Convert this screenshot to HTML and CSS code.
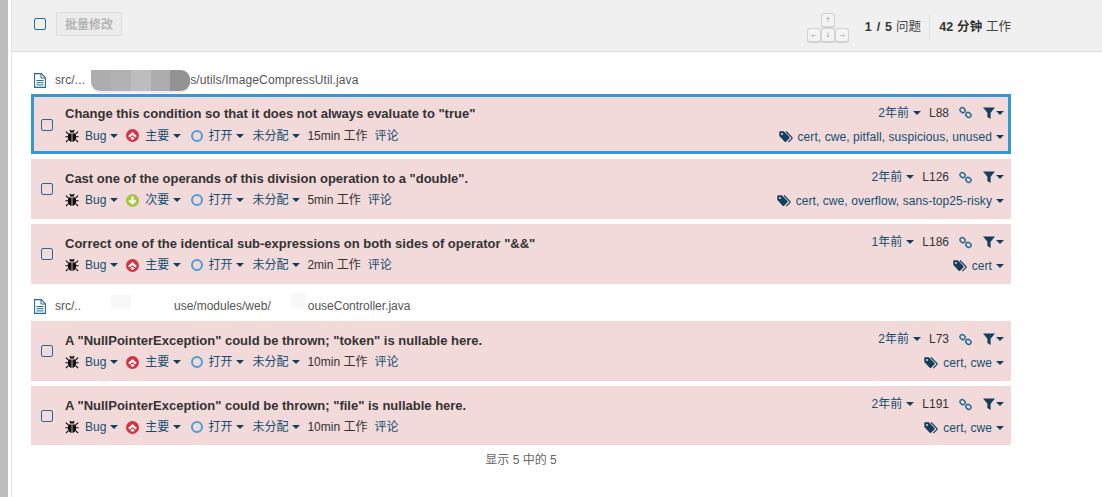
FILE: index.html
```html
<!DOCTYPE html>
<html lang="zh">
<head>
<meta charset="utf-8">
<title>问题</title>
<link rel="stylesheet" href="styles.css">
</head>
<body>
<svg class="defs" width="0" height="0" aria-hidden="true">
  <symbol id="bug" viewBox="0 0 14 14">
    <path fill="#111" d="M4.6 3.6C4.9 2 5.8 1.3 7 1.3s2.1.7 2.4 2.3zM3.7 4.4h6.6c.6.8.9 1.9.9 3.4 0 3.2-1.7 5.2-4.2 5.2S2.8 11 2.8 7.8c0-1.500.3-2.600.9-3.400z"/>
    <path fill="none" stroke="#111" stroke-width="1.100" d="M.8 2.700l2.700 2.300M13.200 2.700l-2.700 2.300M.3 7.800h2.700M13.700 7.800H11M.9 13l2.500-2.300M13.100 13l-2.500-2.300M4.700 1l1 1.200M9.300 1l-1 1.200"/>
    <path stroke="#f2d9da" stroke-width=".8" d="M7 4.400V13"/>
  </symbol>
  <symbol id="major" viewBox="0 0 13 13">
    <circle cx="6.500" cy="6.500" r="6.500" fill="#d4333f"/>
    <path fill="#fff" d="M6.500 3 10.800 6.900 9.300 8.400 6.500 5.900 3.700 8.400 2.200 6.900z"/>
    <path fill="#fff" d="M6.500 7.600 8.700 9.600 6.500 11 4.300 9.600z"/>
  </symbol>
  <symbol id="minor" viewBox="0 0 13 13">
    <circle cx="6.500" cy="6.500" r="6.500" fill="#a4c639"/>
    <path fill="none" stroke="#fff" stroke-width="2" d="M3.200 6.200 6.500 9.400l3.300-3.200"/>
    <path stroke="#fff" stroke-width="2.200" d="M6.500 2.500v6"/>
  </symbol>
  <symbol id="link" viewBox="0 0 13 13">
    <g fill="none" stroke="#236a97" stroke-width="1.500">
      <rect x=".9" y="1.900" width="5.400" height="4.400" rx="2.200" transform="rotate(40 3.600 4.100)"/>
      <rect x="6.700" y="6.700" width="5.400" height="4.400" rx="2.200" transform="rotate(40 9.400 8.900)"/>
    </g>
  </symbol>
  <symbol id="funnel" viewBox="0 0 12 12">
    <path fill="#12405c" d="M0 .5h12L7.600 5.700V12L4.400 10V5.700z"/>
  </symbol>
  <symbol id="tags" viewBox="0 0 14 12">
    <path fill="#12405c" d="M.3 1.300C.3.700.7.300 1.300.300h3.500l5.700 5.600c.4.400.4 1 0 1.400l-3.400 3.400c-.4.400-1 .4-1.400 0L.3 5z"/>
    <path fill="none" stroke="#12405c" stroke-width="1.200" d="M7 .5l5.800 5.800c.4.400.4.900 0 1.300L9.300 11.100"/>
    <circle cx="3" cy="3" r="1" fill="#f2d9da"/>
  </symbol>
  <symbol id="file" viewBox="0 0 12 15">
    <path fill="none" stroke="#236a97" stroke-width="1.100" d="M.6.600h6.700l4.100 4.100v9.700H.6z"/>
    <path fill="none" stroke="#236a97" d="M7 .6v4.400h4.400M2.500 7.500h7M2.500 9.700h7M2.500 11.900h7"/>
  </symbol>
</svg>

<div class="page">
  <aside class="scrollbar"></aside>
  <main class="main">
    <header class="toolbar">
      <div class="toolbar-left">
        <span class="check check-top"></span>
        <button class="bulk" disabled>批量修改</button>
      </div>
      <div class="toolbar-right">
        <div class="keys">
          <span class="key key-up">↑</span>
          <span class="key key-left">←</span>
          <span class="key key-down">↓</span>
          <span class="key key-right">→</span>
        </div>
        <div class="count"><b>1 / 5</b> 问题</div>
        <div class="effort"><b>42 分钟</b> 工作</div>
      </div>
    </header>

    <section class="content">
      <div class="file-head file-head-first">
        <svg class="file-icon"><use href="#file"/></svg>
        <span class="path">src/...</span>
        <span class="smudge">
          <i class="s1"></i><i class="s2"></i><i class="s3"></i><i class="s4"></i><i class="s5"></i>
        </span>
        <span class="path">s/utils/ImageCompressUtil.java</span>
      </div>

      <article class="issue selected">
        <span class="check"></span>
        <div class="body">
          <div class="line">
            <span class="title">Change this condition so that it does not always evaluate to "true"</span>
            <span class="side"><a>2年前<i class="caret"></i></a><span class="ln">L88</span><svg class="ic-link"><use href="#link"/></svg><span class="filter"><svg class="ic-funnel"><use href="#funnel"/></svg><i class="caret"></i></span></span>
          </div>
          <div class="line">
            <span class="meta"><svg class="ic-bug"><use href="#bug"/></svg><a>Bug<i class="caret"></i></a><svg class="ic-sev"><use href="#major"/></svg><a>主要<i class="caret"></i></a><span class="ring"></span><a>打开<i class="caret"></i></a><a>未分配<i class="caret"></i></a><span class="eff">15min 工作</span><a>评论</a></span>
            <span class="side"><svg class="ic-tags"><use href="#tags"/></svg><a class="tags">cert, cwe, pitfall, suspicious, unused<i class="caret"></i></a></span>
          </div>
        </div>
      </article>

      <article class="issue">
        <span class="check"></span>
        <div class="body">
          <div class="line">
            <span class="title">Cast one of the operands of this division operation to a "double".</span>
            <span class="side"><a>2年前<i class="caret"></i></a><span class="ln">L126</span><svg class="ic-link"><use href="#link"/></svg><span class="filter"><svg class="ic-funnel"><use href="#funnel"/></svg><i class="caret"></i></span></span>
          </div>
          <div class="line">
            <span class="meta"><svg class="ic-bug"><use href="#bug"/></svg><a>Bug<i class="caret"></i></a><svg class="ic-sev"><use href="#minor"/></svg><a>次要<i class="caret"></i></a><span class="ring"></span><a>打开<i class="caret"></i></a><a>未分配<i class="caret"></i></a><span class="eff">5min 工作</span><a>评论</a></span>
            <span class="side"><svg class="ic-tags"><use href="#tags"/></svg><a class="tags">cert, cwe, overflow, sans-top25-risky<i class="caret"></i></a></span>
          </div>
        </div>
      </article>

      <article class="issue">
        <span class="check"></span>
        <div class="body">
          <div class="line">
            <span class="title">Correct one of the identical sub-expressions on both sides of operator "&amp;&amp;"</span>
            <span class="side"><a>1年前<i class="caret"></i></a><span class="ln">L186</span><svg class="ic-link"><use href="#link"/></svg><span class="filter"><svg class="ic-funnel"><use href="#funnel"/></svg><i class="caret"></i></span></span>
          </div>
          <div class="line">
            <span class="meta"><svg class="ic-bug"><use href="#bug"/></svg><a>Bug<i class="caret"></i></a><svg class="ic-sev"><use href="#major"/></svg><a>主要<i class="caret"></i></a><span class="ring"></span><a>打开<i class="caret"></i></a><a>未分配<i class="caret"></i></a><span class="eff">2min 工作</span><a>评论</a></span>
            <span class="side"><svg class="ic-tags"><use href="#tags"/></svg><a class="tags">cert<i class="caret"></i></a></span>
          </div>
        </div>
      </article>

      <div class="file-head">
        <svg class="file-icon"><use href="#file"/></svg>
        <span class="path">src/..</span>
        <span class="gap-a"></span>
        <span class="path">use/modules/web/</span>
        <span class="gap-b"></span>
        <span class="path">ouseController.java</span>
      </div>

      <article class="issue">
        <span class="check"></span>
        <div class="body">
          <div class="line">
            <span class="title">A "NullPointerException" could be thrown; "token" is nullable here.</span>
            <span class="side"><a>2年前<i class="caret"></i></a><span class="ln">L73</span><svg class="ic-link"><use href="#link"/></svg><span class="filter"><svg class="ic-funnel"><use href="#funnel"/></svg><i class="caret"></i></span></span>
          </div>
          <div class="line">
            <span class="meta"><svg class="ic-bug"><use href="#bug"/></svg><a>Bug<i class="caret"></i></a><svg class="ic-sev"><use href="#major"/></svg><a>主要<i class="caret"></i></a><span class="ring"></span><a>打开<i class="caret"></i></a><a>未分配<i class="caret"></i></a><span class="eff">10min 工作</span><a>评论</a></span>
            <span class="side"><svg class="ic-tags"><use href="#tags"/></svg><a class="tags">cert, cwe<i class="caret"></i></a></span>
          </div>
        </div>
      </article>

      <article class="issue last">
        <span class="check"></span>
        <div class="body">
          <div class="line">
            <span class="title">A "NullPointerException" could be thrown; "file" is nullable here.</span>
            <span class="side"><a>2年前<i class="caret"></i></a><span class="ln">L191</span><svg class="ic-link"><use href="#link"/></svg><span class="filter"><svg class="ic-funnel"><use href="#funnel"/></svg><i class="caret"></i></span></span>
          </div>
          <div class="line">
            <span class="meta"><svg class="ic-bug"><use href="#bug"/></svg><a>Bug<i class="caret"></i></a><svg class="ic-sev"><use href="#major"/></svg><a>主要<i class="caret"></i></a><span class="ring"></span><a>打开<i class="caret"></i></a><a>未分配<i class="caret"></i></a><span class="eff">10min 工作</span><a>评论</a></span>
            <span class="side"><svg class="ic-tags"><use href="#tags"/></svg><a class="tags">cert, cwe<i class="caret"></i></a></span>
          </div>
        </div>
      </article>

      <p class="total">显示 5 中的 5</p>
    </section>
  </main>
</div>
</body>
</html>
```
FILE: styles.css
```css
* { box-sizing: border-box; }
html, body { margin: 0; height: 100%; overflow: hidden; background: #fff; }
body {
  font-family: "Liberation Sans", "Noto Sans CJK SC", sans-serif;
  font-size: 12px;
  line-height: 16px;
  color: #444;
}
.defs { position: absolute; }
.page { display: flex; height: 497px; }
.scrollbar { width: 12px; flex: none; background: #fff; border-left: 8px solid #bdbdbd; border-right: 1px solid #e6e6e6; }
.main { flex: 1; min-width: 0; }

.toolbar {
  height: 52px;
  background: #f0f0f0;
  border-bottom: 1px solid #ddd;
  display: flex;
  justify-content: space-between;
  padding: 0 91px 0 22px;
}
.toolbar-left { display: flex; align-items: center; gap: 10px; padding-bottom: 3px; }
.check {
  display: block;
  width: 12px;
  height: 12px;
  border: 1.5px solid #236a97;
  border-radius: 2px;
  flex: none;
}
.bulk {
  font: bold 12px/16px "Liberation Sans", "Noto Sans CJK SC", sans-serif;
  color: #b4b4b4;
  background: #ececec;
  border: 1px solid #ddd;
  border-radius: 2px;
  width: 66px;
  height: 24px;
  padding: 1px 0 0;
}
.toolbar-right { display: flex; align-items: flex-start; padding-top: 13px; font-size: 12.500px; }
.keys {
  display: grid;
  grid-template-columns: repeat(3, 14px);
  grid-template-rows: 15px 15px;
  margin-right: 16px;
}
.key {
  font-size: 8px;
  line-height: 12px;
  text-align: center;
  color: #666;
  background: #f3f3f3;
  border: 1px solid #d2d2d2;
  border-bottom-width: 2px;
  border-radius: 3px;
}
.key-up { grid-column: 2; grid-row: 1; }
.key-left { grid-column: 1; grid-row: 2; }
.key-down { grid-column: 2; grid-row: 2; }
.key-right { grid-column: 3; grid-row: 2; }
.count { margin-top: 2px; padding-right: 8px; border-right: 1px solid #e0e0e0; line-height: 25px; }
.effort { margin-top: 2px; padding-left: 9px; line-height: 25px; }
.count b, .effort b { color: #333; }
.count b { letter-spacing: .7px; }
.effort b { letter-spacing: .2px; }

.content { padding: 17px 0 0 19px; width: 999px; }
.file-head { display: flex; align-items: center; height: 22px; margin: 11px 0 4px; padding-left: 3px; color: #555; }
.file-head-first { margin-top: 0; margin-bottom: 3px; letter-spacing: .12px; }
.file-icon { width: 12px; height: 15px; margin-right: 9px; flex: none; }
.path { white-space: pre; }
.smudge { display: flex; width: 99px; height: 21px; margin-left: 6px; border-radius: 0 9px 9px 9px; overflow: hidden; box-shadow: 0 2px 0 #f6e8e8; }
.smudge i { display: block; width: 20px; }
.s1 { background: #aeaeae; }
.s2 { background: #b2b2b2; }
.s3 { background: #bdbdbd; }
.s4 { background: #adadad; }
.s5 { background: #939393; }
.gap-a {
  width: 93px;
  height: 13px;
  align-self: flex-start;
  background: linear-gradient(#f8f8f8, #f8f8f8) 30px 0 / 20px 100% no-repeat;
}
.gap-b {
  width: 37px;
  height: 15px;
  margin-top: -2px;
  align-self: flex-start;
  background: linear-gradient(#f8f8f8, #f8f8f8) 20px 0 / 15px 100% no-repeat;
}

.issue {
  display: flex;
  align-items: center;
  height: 60px;
  margin-bottom: 5px;
  padding: 0 7px 0 10px;
  background: #f2d9da;
}
.issue.selected { border: 3px solid #3597d3; padding: 1px 4px 0 7px; }
.issue.last { height: 59px; margin-bottom: 0; padding-top: 1px; }
.body { flex: 1; min-width: 0; margin-left: 12px; }
.line { display: flex; justify-content: space-between; align-items: center; height: 22px; }
.line:first-child .side { margin-bottom: 2px; }
.line:last-child .side { margin-top: 2px; }
.title { font-size: 13px; font-weight: bold; color: #333; padding-top: 1px; }
.side, .meta { display: flex; align-items: center; }
a { color: #12506f; }
.tags { letter-spacing: .08px; }
.caret {
  display: inline-block;
  vertical-align: 2px;
  margin-left: 4px;
  border: 4px solid transparent;
  border-top-color: #12405c;
  border-bottom-width: 0;
}
.ic-bug { width: 14px; height: 14px; margin-right: 6px; }
.ic-sev { width: 13px; height: 13px; margin: 0 6px 0 8px; }
.ring { width: 12px; height: 12px; border: 2px solid #4b9fd5; border-radius: 50%; margin: 0 5px 0 10px; }
.meta a:nth-of-type(4) { margin-left: 8px; }
.eff { margin: 0 7px 0 7px; color: #333; }
.ln { margin-left: 8px; color: #333; }
.ic-link { width: 13px; height: 13px; margin-left: 10px; }
.filter { display: flex; align-items: center; margin-left: 11px; }
.ic-funnel { width: 12px; height: 12px; }
.filter .caret { margin-left: 1px; }
.ic-tags { width: 14px; height: 12px; margin-right: 5px; }
.total { margin: 7px 0 0; text-align: center; color: #666; line-height: 16px; }
```
